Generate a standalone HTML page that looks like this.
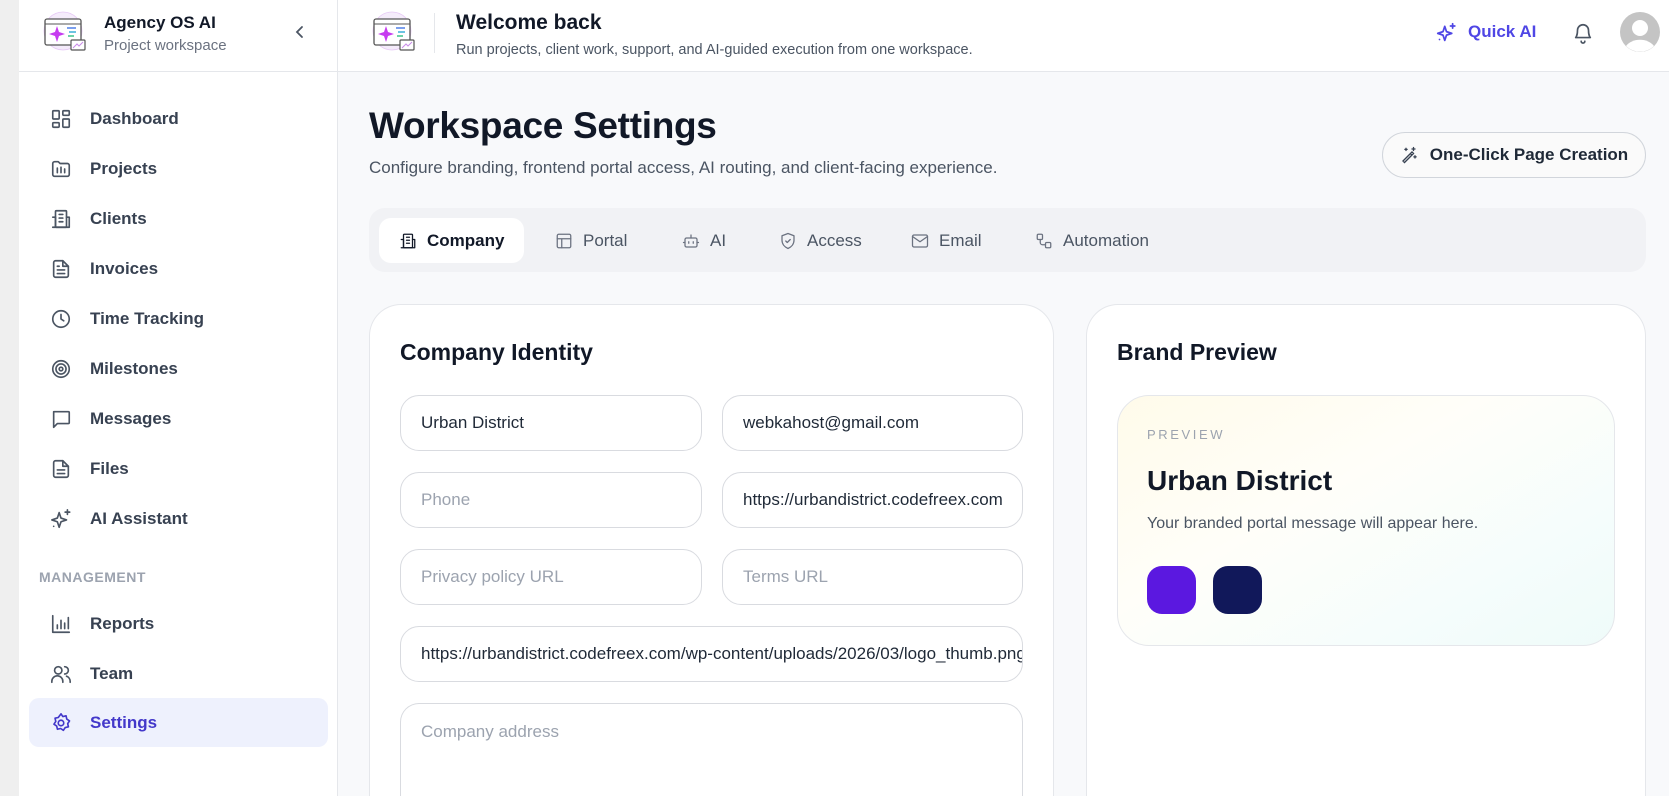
<!DOCTYPE html>
<html style="overflow:hidden;width:1669px;height:796px"><head><meta charset="utf-8"><style>
*{box-sizing:border-box;margin:0;padding:0}
body{width:1669px;height:796px;overflow:hidden;font-family:"Liberation Sans",sans-serif;background:#f8f9fb;color:#111827;position:relative}
.abs{position:absolute}
.strip{left:0;top:0;width:19px;height:796px;background:#efefef}
.side{left:19px;top:0;width:319px;height:796px;background:#fff;border-right:1px solid #e5e7eb}
.sidehead{left:19px;top:0;width:319px;height:72px;border-bottom:1px solid #e5e7eb}
.top{left:338px;top:0;width:1331px;height:72px;background:#fff;border-bottom:1px solid #e5e7eb}
.nav{position:absolute;left:50px;height:24px;display:flex;align-items:center;font-size:17px;font-weight:600;color:#374151}
.nav svg{width:22px;height:22px;margin-right:18px;stroke:#4b5563;fill:none;stroke-width:1.8;stroke-linecap:round;stroke-linejoin:round}
.card{background:#fff;border:1px solid #e5e7eb;border-bottom:none;border-radius:32px 32px 0 0}
.inp{position:absolute;border:1px solid #d9dbe0;border-radius:19px;background:#fff;font-size:17px;color:#1f2937;padding-left:20px;display:flex;align-items:center;white-space:nowrap;overflow:hidden}
.ph{color:#9ca3af}
.tab{position:absolute;top:218px;height:45px;display:flex;align-items:center;font-size:17px;color:#4b5563}
.tab svg{width:18px;height:18px;margin-right:10px;stroke:#6b7280;fill:none;stroke-width:1.7;stroke-linecap:round;stroke-linejoin:round}
</style></head><body>
<div class="abs strip"></div>
<div class="abs side"></div>
<div class="abs sidehead"></div>
<div class="abs top"></div>

<svg class="abs" style="left:43px;top:11px" width="44" height="44" viewBox="0 0 44 44"><circle cx="20" cy="20" r="19" fill="#f5ecfb" stroke="#e6c9f5" stroke-width="0.8"/><rect x="2" y="8" width="36" height="26" rx="2" fill="#fff" stroke="#555" stroke-width="1.3"/><line x1="2" y1="13" x2="38" y2="13" stroke="#555" stroke-width="1"/><path d="M14 15 L16 21 L22 23 L16 25 L14 31 L12 25 L6 23 L12 21Z" fill="#c63cf0"/><line x1="24" y1="17" x2="33" y2="17" stroke="#4f7fe8" stroke-width="1.5"/><line x1="26" y1="21" x2="33" y2="21" stroke="#3ab0d8" stroke-width="1.5"/><line x1="25" y1="25" x2="31" y2="25" stroke="#3cc48a" stroke-width="1.5"/><rect x="28" y="29" width="14" height="10" rx="1" fill="#fff" stroke="#555" stroke-width="1.2"/><path d="M30 37 L34 33 L36 35 L40 31" stroke="#c98ae8" fill="none"/></svg>
<div class="abs" style="left:104px;top:13px;font-size:17px;font-weight:700">Agency OS AI</div>
<div class="abs" style="left:104px;top:37px;font-size:15px;color:#6b7280">Project workspace</div>
<svg class="abs" style="left:292px;top:24px" width="16" height="16" viewBox="0 0 16 16"><path d="M10 3 L5 8 L10 13" fill="none" stroke="#4b5563" stroke-width="1.8" stroke-linecap="round"/></svg>

<div class="nav" style="top:107px"><svg viewBox="0 0 24 24"><rect x="3" y="3" width="7" height="9" rx="1"/><rect x="14" y="3" width="7" height="5" rx="1"/><rect x="14" y="12" width="7" height="9" rx="1"/><rect x="3" y="16" width="7" height="5" rx="1"/></svg>Dashboard</div>
<div class="nav" style="top:157px"><svg viewBox="0 0 24 24"><path d="M3 6a2 2 0 0 1 2-2h4l2 2h8a2 2 0 0 1 2 2v10a2 2 0 0 1-2 2H5a2 2 0 0 1-2-2z"/><path d="M8 11v5M12 10v6M16 12v4"/></svg>Projects</div>
<div class="nav" style="top:207px"><svg viewBox="0 0 24 24"><rect x="6" y="3" width="12" height="18" rx="1"/><path d="M3 21h18M3 10h3v11M18 10h3v11M10 7h4M10 11h4M10 15h4"/></svg>Clients</div>
<div class="nav" style="top:257px"><svg viewBox="0 0 24 24"><path d="M14 3H6a2 2 0 0 0-2 2v14a2 2 0 0 0 2 2h12a2 2 0 0 0 2-2V9z"/><path d="M14 3v6h6M8 13h8M8 17h8M8 9h2"/></svg>Invoices</div>
<div class="nav" style="top:307px"><svg viewBox="0 0 24 24"><circle cx="12" cy="12" r="9"/><path d="M12 7v5l3 2"/></svg>Time Tracking</div>
<div class="nav" style="top:357px"><svg viewBox="0 0 24 24"><circle cx="12" cy="12" r="9"/><circle cx="12" cy="12" r="5.5"/><circle cx="12" cy="12" r="2"/></svg>Milestones</div>
<div class="nav" style="top:407px"><svg viewBox="0 0 24 24"><path d="M4 4h16a1 1 0 0 1 1 1v11a1 1 0 0 1-1 1H8l-4 4z"/></svg>Messages</div>
<div class="nav" style="top:457px"><svg viewBox="0 0 24 24"><path d="M14 3H6a2 2 0 0 0-2 2v14a2 2 0 0 0 2 2h12a2 2 0 0 0 2-2V9z"/><path d="M14 3v6h6M8 13h8M8 17h8"/></svg>Files</div>
<div class="nav" style="top:507px"><svg viewBox="0 0 24 24"><path d="M10 5 L12 11 L18 13 L12 15 L10 21 L8 15 L2 13 L8 11Z"/><path d="M19 2v5M16.5 4.5h5M4 20h.01"/></svg>AI Assistant</div>
<div class="abs" style="left:39px;top:569px;font-size:14px;font-weight:600;color:#9ca3af;letter-spacing:0.5px">MANAGEMENT</div>
<div class="nav" style="top:612px"><svg viewBox="0 0 24 24"><path d="M3 3v18h18M8 17v-4M12 17V8M16 17v-6M20 17V5"/></svg>Reports</div>
<div class="nav" style="top:662px"><svg viewBox="0 0 24 24"><circle cx="9" cy="8" r="4"/><path d="M2 21v-1a6 6 0 0 1 12 0v1M16 4a4 4 0 0 1 0 8M22 21v-1a6 6 0 0 0-4-5.6"/></svg>Team</div>
<div class="abs" style="left:29px;top:698px;width:299px;height:49px;background:#eef1fd;border-radius:10px"></div>
<div class="nav" style="top:711px;color:#4338ca"><svg viewBox="0 0 24 24" style="stroke:#4338ca"><circle cx="12" cy="12" r="3"/><path d="M12 2l2 3 3.5-.8.8 3.5 3 2-2 3 .8 3.5-3.5.8-2 3-3-2-3.5.8-.8-3.5-3-2 2-3-.8-3.5 3.5-.8z"/></svg>Settings</div>

<svg class="abs" style="left:372px;top:11px" width="44" height="44" viewBox="0 0 44 44"><circle cx="20" cy="20" r="19" fill="#f5ecfb" stroke="#e6c9f5" stroke-width="0.8"/><rect x="2" y="8" width="36" height="26" rx="2" fill="#fff" stroke="#555" stroke-width="1.3"/><line x1="2" y1="13" x2="38" y2="13" stroke="#555" stroke-width="1"/><path d="M14 15 L16 21 L22 23 L16 25 L14 31 L12 25 L6 23 L12 21Z" fill="#c63cf0"/><line x1="24" y1="17" x2="33" y2="17" stroke="#4f7fe8" stroke-width="1.5"/><line x1="26" y1="21" x2="33" y2="21" stroke="#3ab0d8" stroke-width="1.5"/><line x1="25" y1="25" x2="31" y2="25" stroke="#3cc48a" stroke-width="1.5"/><rect x="28" y="29" width="14" height="10" rx="1" fill="#fff" stroke="#555" stroke-width="1.2"/><path d="M30 37 L34 33 L36 35 L40 31" stroke="#c98ae8" fill="none"/></svg>
<div class="abs" style="left:434px;top:13px;width:1px;height:40px;background:#e5e7eb"></div>
<div class="abs" style="left:456px;top:11px;font-size:21px;font-weight:600">Welcome back</div>
<div class="abs" style="left:456px;top:42px;font-size:14.5px;color:#4b5563">Run projects, client work, support, and AI-guided execution from one workspace.</div>
<svg class="abs" style="left:1436px;top:22px" width="21" height="21" viewBox="0 0 24 24" fill="none" stroke="#4f46e5" stroke-width="2" stroke-linecap="round" stroke-linejoin="round"><path d="M10 5 L12 11 L18 13 L12 15 L10 21 L8 15 L2 13 L8 11Z"/><path d="M19 2v5M16.5 4.5h5M4 20h.01"/></svg>
<div class="abs" style="left:1468px;top:22px;font-size:17px;font-weight:700;color:#4f46e5">Quick AI</div>
<svg class="abs" style="left:1572px;top:21px" width="22" height="24" viewBox="0 0 24 24" fill="none" stroke="#4b5563" stroke-width="1.8" stroke-linecap="round" stroke-linejoin="round"><path d="M6 9a6 6 0 0 1 12 0c0 6 2 8 2 8H4s2-2 2-8"/><path d="M10 21a2 2 0 0 0 4 0"/></svg>
<svg class="abs" style="left:1620px;top:12px" width="40" height="40" viewBox="0 0 40 40"><circle cx="20" cy="20" r="20" fill="#c4c4c4"/><circle cx="20" cy="16" r="8" fill="#fff"/><path d="M6 34a16 12 0 0 1 28 0 20 20 0 0 1-28 0" fill="#fff"/></svg>

<div class="abs" style="left:369px;top:105px;font-size:37px;font-weight:800;letter-spacing:-0.3px">Workspace Settings</div>
<div class="abs" style="left:369px;top:158px;font-size:17px;color:#4b5563">Configure branding, frontend portal access, AI routing, and client-facing experience.</div>
<div class="abs" style="left:1382px;top:132px;width:264px;height:46px;border:1px solid #d1d5db;border-radius:23px;background:#fafafa;display:flex;align-items:center;justify-content:center;font-size:17px;font-weight:600;color:#1f2937"><svg width="18" height="18" viewBox="0 0 24 24" fill="none" stroke="#374151" stroke-width="1.8" stroke-linecap="round" style="margin-right:12px"><path d="M4 20L16 8l2 2L6 22zM14 10l2 2M18 2v4M16 4h4M8 3v3M6.5 4.5h3M20 13v3M18.5 14.5h3"/></svg>One-Click Page Creation</div>

<div class="abs" style="left:369px;top:208px;width:1277px;height:64px;background:#f1f2f5;border-radius:16px"></div>
<div class="abs" style="left:379px;top:218px;width:145px;height:45px;background:#fff;border-radius:12px"></div>
<div class="tab" style="left:399px;color:#111827;font-weight:600"><svg viewBox="0 0 24 24" style="stroke:#111827"><rect x="6" y="3" width="12" height="18" rx="1"/><path d="M3 21h18M3 10h3v11M18 10h3v11M10 7h4M10 11h4M10 15h4"/></svg>Company</div>
<div class="tab" style="left:555px"><svg viewBox="0 0 24 24"><rect x="3" y="3" width="18" height="18" rx="2"/><path d="M3 9h18M9 9v12"/></svg>Portal</div>
<div class="tab" style="left:682px"><svg viewBox="0 0 24 24"><rect x="4" y="8" width="16" height="12" rx="2"/><path d="M12 8V4M9 13v2M15 13v2M2 14h2M20 14h2"/></svg>AI</div>
<div class="tab" style="left:779px"><svg viewBox="0 0 24 24"><path d="M12 2l8 3v6c0 5-3.5 9-8 11-4.5-2-8-6-8-11V5z"/><path d="M9 12l2 2 4-4"/></svg>Access</div>
<div class="tab" style="left:911px"><svg viewBox="0 0 24 24"><rect x="2" y="4" width="20" height="16" rx="2"/><path d="M2 6l10 7 10-7"/></svg>Email</div>
<div class="tab" style="left:1035px"><svg viewBox="0 0 24 24"><rect x="3" y="3" width="7" height="7" rx="1.5"/><rect x="14" y="14" width="7" height="7" rx="1.5"/><path d="M7 10v4a3 3 0 0 0 3 3h4"/></svg>Automation</div>

<div class="abs card" style="left:369px;top:304px;width:685px;height:492px"></div>
<div class="abs" style="left:400px;top:339px;font-size:23px;font-weight:600">Company Identity</div>
<div class="inp" style="left:400px;top:395px;width:302px;height:56px">Urban District</div>
<div class="inp" style="left:722px;top:395px;width:301px;height:56px">webkahost@gmail.com</div>
<div class="inp ph" style="left:400px;top:472px;width:302px;height:56px">Phone</div>
<div class="inp" style="left:722px;top:472px;width:301px;height:56px;padding-right:20px">https://urbandistrict.codefreex.com</div>
<div class="inp ph" style="left:400px;top:549px;width:302px;height:56px">Privacy policy URL</div>
<div class="inp ph" style="left:722px;top:549px;width:301px;height:56px">Terms URL</div>
<div class="inp" style="left:400px;top:626px;width:623px;height:56px;padding-right:20px">https://urbandistrict.codefreex.com/wp-content/uploads/2026/03/logo_thumb.png</div>
<div class="inp ph" style="left:400px;top:703px;width:623px;height:93px;align-items:flex-start;padding-top:18px;border-bottom:none;border-radius:19px 19px 0 0">Company address</div>

<div class="abs card" style="left:1086px;top:304px;width:560px;height:492px"></div>
<div class="abs" style="left:1117px;top:339px;font-size:23px;font-weight:600">Brand Preview</div>
<div class="abs" style="left:1117px;top:395px;width:498px;height:251px;border:1px solid #e5e7eb;border-radius:32px;background:linear-gradient(150deg,#fffbea 0%,#fffef9 40%,#f5fdfc 75%,#effbf9 100%)"></div>
<div class="abs" style="left:1147px;top:427px;font-size:13px;color:#9ca3af;letter-spacing:2.6px">PREVIEW</div>
<div class="abs" style="left:1147px;top:465px;font-size:28px;font-weight:600">Urban District</div>
<div class="abs" style="left:1147px;top:515px;font-size:16px;color:#4b5563">Your branded portal message will appear here.</div>
<div class="abs" style="left:1147px;top:566px;width:49px;height:48px;border-radius:15px;background:#5b18e0"></div>
<div class="abs" style="left:1213px;top:566px;width:49px;height:48px;border-radius:15px;background:#11185a"></div>
</body></html>
